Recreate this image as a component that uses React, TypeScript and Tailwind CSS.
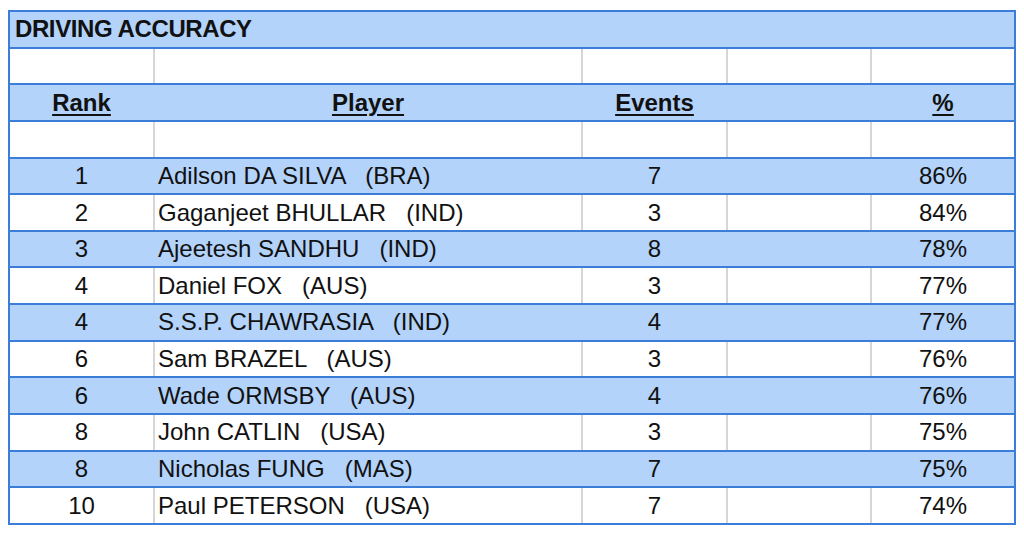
import React from "react";

type Row = { rank: string; name: string; country: string; events: string; pct: string };

const rows: Row[] = [
  { rank: "1", name: "Adilson DA SILVA", country: "(BRA)", events: "7", pct: "86%" },
  { rank: "2", name: "Gaganjeet BHULLAR", country: "(IND)", events: "3", pct: "84%" },
  { rank: "3", name: "Ajeetesh SANDHU", country: "(IND)", events: "8", pct: "78%" },
  { rank: "4", name: "Daniel FOX", country: "(AUS)", events: "3", pct: "77%" },
  { rank: "4", name: "S.S.P. CHAWRASIA", country: "(IND)", events: "4", pct: "77%" },
  { rank: "6", name: "Sam BRAZEL", country: "(AUS)", events: "3", pct: "76%" },
  { rank: "6", name: "Wade ORMSBY", country: "(AUS)", events: "4", pct: "76%" },
  { rank: "8", name: "John CATLIN", country: "(USA)", events: "3", pct: "75%" },
  { rank: "8", name: "Nicholas FUNG", country: "(MAS)", events: "7", pct: "75%" },
  { rank: "10", name: "Paul PETERSON", country: "(USA)", events: "7", pct: "74%" },
];

function Cells({
  blue,
  c1,
  c2,
  c3,
  c4,
  c5,
  header,
}: {
  blue: boolean;
  c1?: React.ReactNode;
  c2?: React.ReactNode;
  c3?: React.ReactNode;
  c4?: React.ReactNode;
  c5?: React.ReactNode;
  header?: boolean;
}) {
  const bg = blue ? "bg-[#b3d3fa]" : "bg-white";
  const div = blue ? "border-l-2 border-[#b3d3fa]" : "border-l-2 border-[#d6d6d6]";
  const txt = header ? "font-bold underline decoration-2 underline-offset-[3px]" : "";
  return (
    <div className={`flex-1 flex border-t-2 border-[#3b7dd8] ${bg}`}>
      <div className={`w-[143px] flex items-center justify-center ${txt}`}>{c1}</div>
      <div className={`w-[428px] flex items-center ${header ? "justify-center" : "justify-start pl-[3px]"} ${div} ${txt}`}>
        {c2}
      </div>
      <div className={`w-[145px] flex items-center justify-center ${div} ${txt}`}>{c3}</div>
      <div className={`w-[144px] flex items-center justify-center ${div} ${txt}`}>{c4}</div>
      <div className={`w-[144px] flex items-center justify-center ${div} ${txt}`}>{c5}</div>
    </div>
  );
}

export default function App() {
  return (
    <div
      className="w-[1024px] h-[535px] bg-white pt-[10px] pl-[8px] text-[24px] leading-none text-[#111]"
      style={{ fontFamily: '"Liberation Sans", Arial, sans-serif' }}
    >
      <div className="w-[1008px] h-[515px] flex flex-col border-l-2 border-r-2 border-b-2 border-[#3b7dd8]">
        <div className="flex-1 flex items-center border-t-2 border-[#3b7dd8] bg-[#b3d3fa] pl-[5px]">
          <span className="font-bold tracking-[-0.4px]">DRIVING ACCURACY</span>
        </div>
        <Cells blue={false} />
        <Cells blue header c1="Rank" c2="Player" c3="Events" c5="%" />
        <Cells blue={false} />
        {rows.map((r, i) => (
          <Cells
            key={i}
            blue={i % 2 === 0}
            c1={r.rank}
            c2={<span className="whitespace-pre">{`${r.name}   ${r.country}`}</span>}
            c3={r.events}
            c5={r.pct}
          />
        ))}
      </div>
    </div>
  );
}
